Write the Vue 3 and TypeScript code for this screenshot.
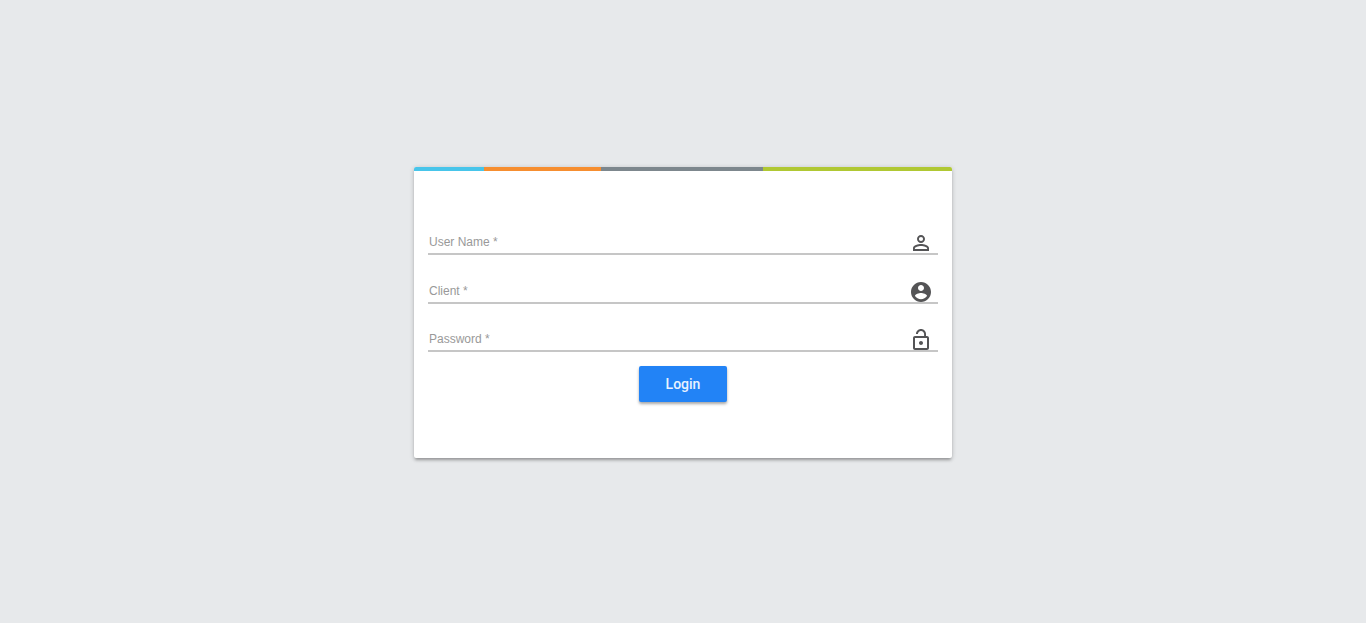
<script setup lang="ts">
import { reactive } from 'vue'

type FieldKey = 'user' | 'client' | 'password'

interface Field {
  key: FieldKey
  label: string
  type: string
  icon: string
}

const form = reactive<Record<FieldKey, string>>({ user: '', client: '', password: '' })

const fields: Field[] = [
  {
    key: 'user',
    label: 'User Name *',
    type: 'text',
    icon: 'M12 5.9a2.1 2.1 0 1 1 0 4.2 2.1 2.1 0 0 1 0-4.2m0 9c2.97 0 6.1 1.46 6.1 2.1v1.1H5.9V17c0-.64 3.13-2.1 6.1-2.1M12 4C9.79 4 8 5.79 8 8s1.79 4 4 4 4-1.79 4-4-1.79-4-4-4zm0 9c-2.67 0-8 1.34-8 4v3h16v-3c0-2.66-5.33-4-8-4z',
  },
  {
    key: 'client',
    label: 'Client *',
    type: 'text',
    icon: 'M12 2C6.48 2 2 6.48 2 12s4.48 10 10 10 10-4.48 10-10S17.52 2 12 2zm0 3c1.66 0 3 1.34 3 3s-1.34 3-3 3-3-1.34-3-3 1.34-3 3-3zm0 14.2c-2.5 0-4.71-1.28-6-3.22.03-1.99 4-3.08 6-3.08 1.99 0 5.97 1.09 6 3.08-1.29 1.94-3.5 3.22-6 3.22z',
  },
  {
    key: 'password',
    label: 'Password *',
    type: 'password',
    icon: 'M12 17c1.1 0 2-.9 2-2s-.9-2-2-2-2 .9-2 2 .9 2 2 2zm6-9h-1V6c0-2.76-2.24-5-5-5S7 3.24 7 6h1.9c0-1.71 1.39-3.1 3.1-3.1s3.1 1.39 3.1 3.1v2H6c-1.1 0-2 .9-2 2v10c0 1.1.9 2 2 2h12c1.1 0 2-.9 2-2V10c0-1.1-.9-2-2-2zm0 12H6V10h12v10z',
  },
]
</script>

<template>
  <main class="page">
    <section class="card">
      <div class="stripe">
        <span class="blue"></span>
        <span class="orange"></span>
        <span class="gray"></span>
        <span class="green"></span>
      </div>
      <form class="form" @submit.prevent>
        <div v-for="field in fields" :key="field.key" class="field">
          <label :for="field.key">{{ field.label }}</label>
          <input :id="field.key" v-model="form[field.key]" :type="field.type" autocomplete="off" />
          <svg viewBox="0 0 24 24" aria-hidden="true"><path :d="field.icon" /></svg>
        </div>
        <button type="submit">Login</button>
      </form>
    </section>
  </main>
</template>

<style>
body {
  margin: 0;
  background: #e7e9eb;
}
</style>

<style scoped>
.page {
  box-sizing: border-box;
  min-height: 100vh;
  padding: 2px 16px 0;
  display: flex;
  align-items: center;
  justify-content: center;
  background: #e7e9eb;
  font-family: "Liberation Sans", Arial, sans-serif;
}
.card {
  width: 100%;
  max-width: 538px;
  background: #fff;
  border-radius: 2px;
  box-shadow: 0 3px 3px -1px rgba(0, 0, 0, 0.25), 0 1px 5px rgba(0, 0, 0, 0.2);
}
.stripe {
  display: flex;
  height: 4px;
  border-radius: 2px 2px 0 0;
  overflow: hidden;
}
.blue { flex: 70; background: #48c5ea; }
.orange { flex: 117; background: #f68e30; }
.gray { flex: 162; background: #7d878d; }
.green { flex: 189; background: #b0c833; }
.form {
  display: flex;
  flex-direction: column;
  padding: 60px 14px 56px;
}
.field {
  display: flex;
  align-items: center;
  height: 22px;
  margin-bottom: 25px;
  padding-right: 5px;
  border-bottom: 2px solid #c6c6c6;
}
.field:nth-child(2) {
  margin-bottom: 24px;
}
.field:nth-child(3) {
  margin-bottom: 14px;
}
.field label {
  padding-left: 1px;
  font-size: 12px;
  line-height: 16px;
  color: #999;
}
.field input {
  flex: 1;
  min-width: 0;
  padding: 0 8px;
  border: 0;
  outline: 0;
  background: transparent;
  font: inherit;
  font-size: 12px;
}
.field svg {
  flex: none;
  align-self: flex-start;
  width: 24px;
  height: 24px;
  fill: #545456;
}
button {
  align-self: center;
  width: 88px;
  height: 36px;
  padding: 0;
  border: 0;
  border-radius: 2px;
  background: #2283f6;
  color: #e9f2ff;
  font-family: Roboto, "Liberation Sans", sans-serif;
  font-size: 14px;
  font-weight: 500;
  box-shadow: 0 2px 3px rgba(0, 0, 0, 0.35);
  cursor: pointer;
}
</style>
